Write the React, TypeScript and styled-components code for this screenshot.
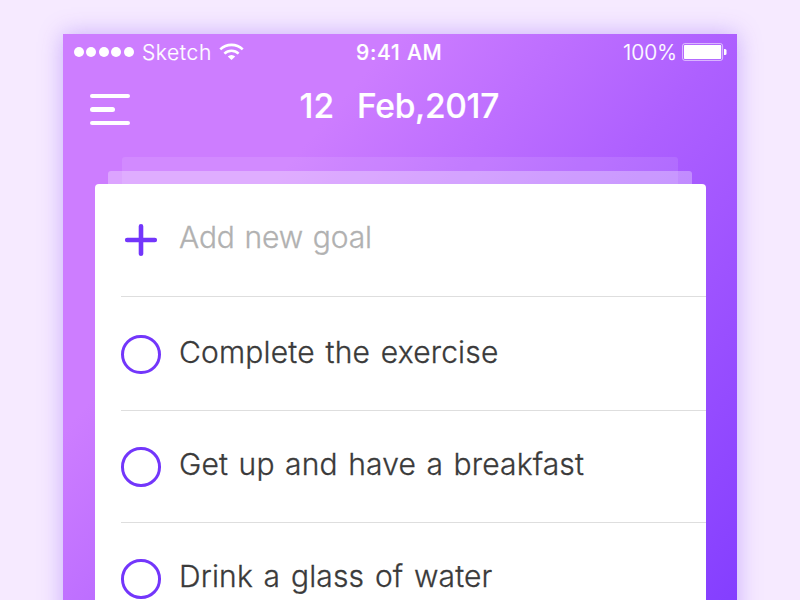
import React from "react";
import styled, { createGlobalStyle } from "styled-components";

const GlobalStyle = createGlobalStyle`
  * { box-sizing: border-box; }
  body {
    margin: 0;
    background: #f6eaff;
    font-family: Inter, "Liberation Sans", sans-serif;
    overflow: hidden;
  }
`;

const Stage = styled.main`
  height: 600px;
  padding: 33.5px 63px 0;
  overflow: hidden;
`;

const Phone = styled.section`
  height: 620px;
  width: 674px;
  background: linear-gradient(130deg, #cd7dff 28%, #ae60ff 56%, #a357ff 67%, #803bff 100%);
  box-shadow: 0 0 22px rgba(126, 70, 245, 0.38);
`;

const StatusBar = styled.header`
  display: grid;
  grid-template-columns: 1fr auto 1fr;
  align-items: center;
  height: 37px;
  padding: 0 10px 0 10.5px;
  color: #fff;
  font-size: 21px;
  line-height: 37px;
`;

const StatusGroup = styled.div<{ $end?: boolean }>`
  display: flex;
  align-items: center;
  justify-content: ${(p) => (p.$end ? "flex-end" : "flex-start")};
`;

const Signal = styled.div`
  display: flex;
  gap: 2.4px;
  margin-right: 8px;
`;

const Dot = styled.i`
  width: 10.2px;
  height: 10.2px;
  border-radius: 50%;
  background: #fff;
`;

const StatusText = styled.span<{ $spacing: number; $weight?: number }>`
  font-weight: ${(p) => p.$weight ?? 300};
  -webkit-text-stroke: 0.2px currentColor;
  letter-spacing: ${(p) => p.$spacing}px;
  white-space: nowrap;
`;

const CenterText = styled(StatusText)`
  margin-left: -2px;
`;

const Wifi = styled.svg`
  margin-left: 7px;
  display: block;
`;

const Battery = styled.svg`
  margin-left: 5px;
  display: block;
`;

const NavBar = styled.nav`
  display: grid;
  grid-template-columns: 237px 1fr;
  align-items: center;
  height: 73px;
  padding-left: 27px;
`;

const MenuButton = styled.button`
  display: grid;
  gap: 9px;
  width: 40px;
  padding: 5px 0 0;
  border: 0;
  background: none;
`;

const MenuLine = styled.span<{ $width: number }>`
  width: ${(p) => p.$width}px;
  height: 4.5px;
  border-radius: 3px;
  background: #fff;
`;

const DateTitle = styled.h1`
  display: flex;
  gap: 23px;
  margin: -2px 0 0 -27.5px;
  color: #fff;
  font-size: 33.5px;
  line-height: 40px;
  font-weight: 550;
  -webkit-text-stroke: 0.2px currentColor;
`;

const DatePart = styled.span<{ $spacing: number }>`
  letter-spacing: ${(p) => p.$spacing}px;
`;

const Deck = styled.div`
  display: grid;
  justify-items: center;
  padding-top: 13.5px;
`;

const Sheet = styled.div<{ $width: number; $offset: number; $alpha: number }>`
  grid-area: 1 / 1;
  width: ${(p) => p.$width}px;
  height: ${(p) => 27 - p.$offset}px;
  margin-top: ${(p) => p.$offset}px;
  border-radius: 3px 3px 0 0;
  background: rgba(255, 255, 255, ${(p) => p.$alpha});
`;

const Card = styled.ul`
  grid-area: 1 / 1;
  width: 611px;
  margin: 27px 0 0;
  padding: 0 0 0 26.5px;
  list-style: none;
  border-radius: 4px;
  background: #fff;
`;

const Row = styled.li<{ $height: number }>`
  display: flex;
  align-items: center;
  height: ${(p) => p.$height}px;
  border-bottom: 1px solid #dedede;
`;

const IconSlot = styled.span<{ $drop: number }>`
  display: flex;
  justify-content: center;
  width: 40px;
  margin-right: 18px;
  padding-top: ${(p) => p.$drop}px;
`;

const Check = styled.span`
  width: 39.5px;
  height: 39.5px;
  border: 3px solid #7336fb;
  border-radius: 50%;
`;

const Label = styled.span<{ $muted?: boolean; $lift: number; $spacing: number; $word: number }>`
  padding-bottom: ${(p) => p.$lift}px;
  color: ${(p) => (p.$muted ? "#b1b1b1" : "#3a3a3a")};
  font-size: 30px;
  line-height: 40px;
  font-weight: 350;
  -webkit-text-stroke: 0.3px currentColor;
  letter-spacing: ${(p) => p.$spacing}px;
  word-spacing: ${(p) => p.$word}px;
  white-space: nowrap;
`;

const goals = [
  { text: "Complete the exercise", height: 114, drop: 3, lift: 3, spacing: 0.17, word: 2.2 },
  { text: "Get up and have a breakfast", height: 112, drop: 1.5, lift: 4, spacing: 0.15, word: 1.9 },
  { text: "Drink a glass of water", height: 113, drop: 1, lift: 6, spacing: 0.15, word: 2.1 },
];

export default function App() {
  return (
    <Stage>
      <GlobalStyle />
      <Phone>
        <StatusBar>
          <StatusGroup>
            <Signal>
              {[0, 1, 2, 3, 4].map((n) => (
                <Dot key={n} />
              ))}
            </Signal>
            <StatusText $spacing={0.6}>Sketch</StatusText>
            <Wifi width="25" height="18" viewBox="0 0 25 18" fill="none" stroke="#fff">
              <path d="M1.3 6.4a16 16 0 0 1 22.4 0" strokeWidth="2.6" />
              <path d="M5.4 10.6a10.2 10.2 0 0 1 14.2 0" strokeWidth="2.5" />
              <path d="M8.8 13.5a5.3 5.3 0 0 1 7.4 0L12.5 17z" fill="#fff" stroke="none" />
            </Wifi>
          </StatusGroup>
          <CenterText $spacing={0.75} $weight={500}>9:41 AM</CenterText>
          <StatusGroup $end>
            <StatusText $spacing={0}>100%</StatusText>
            <Battery width="45" height="18" viewBox="0 0 45 18" fill="none">
              <rect x="0.6" y="0.6" width="40" height="16.8" rx="2.2" stroke="#fff" strokeOpacity=".6" />
              <rect x="2" y="2" width="37.2" height="14" rx="0.8" fill="#fff" />
              <path d="M42 6h1a1.5 1.5 0 0 1 1.5 1.5v3A1.5 1.5 0 0 1 43 12h-1z" fill="#fff" />
            </Battery>
          </StatusGroup>
        </StatusBar>
        <NavBar>
          <MenuButton aria-label="Menu">
            <MenuLine $width={40} />
            <MenuLine $width={24.5} />
            <MenuLine $width={40} />
          </MenuButton>
          <DateTitle>
            <DatePart $spacing={0}>12</DatePart>
            <DatePart $spacing={-0.3}>Feb,2017</DatePart>
          </DateTitle>
        </NavBar>
        <Deck>
          <Sheet $width={556} $offset={0} $alpha={0.1} />
          <Sheet $width={584} $offset={13.5} $alpha={0.3} />
          <Card>
            <Row $height={112.5}>
              <IconSlot $drop={1}>
                <svg width="34" height="34" viewBox="0 0 34 34" stroke="#7336fb" strokeWidth="4.6" strokeLinecap="round">
                  <path d="M17 3.2v27.6M3.2 17h27.6" />
                </svg>
              </IconSlot>
              <Label $muted $lift={5} $spacing={-0.15} $word={1.5}>Add new goal</Label>
            </Row>
            {goals.map((g) => (
              <Row key={g.text} $height={g.height}>
                <IconSlot $drop={g.drop}>
                  <Check />
                </IconSlot>
                <Label $lift={g.lift} $spacing={g.spacing} $word={g.word}>{g.text}</Label>
              </Row>
            ))}
          </Card>
        </Deck>
      </Phone>
    </Stage>
  );
}
